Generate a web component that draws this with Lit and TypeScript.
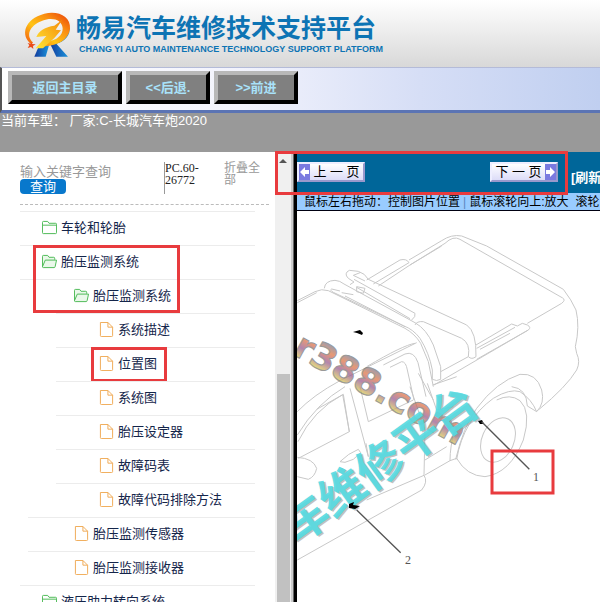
import { LitElement, html, css, svg, nothing } from "lit";
import { customElement, property } from "lit/decorators.js";

type Kind = "folder" | "open" | "file";
interface Row {
  label: string;
  kind: Kind;
  level: 1 | 2 | 3;
  rule?: "deep" | "mid";
  mark?: boolean;
}

const ROWS: Row[] = [
  { label: "车轮和轮胎", kind: "folder", level: 1 },
  { label: "胎压监测系统", kind: "open", level: 1 },
  { label: "胎压监测系统", kind: "open", level: 2 },
  { label: "系统描述", kind: "file", level: 3, rule: "deep" },
  { label: "位置图", kind: "file", level: 3, rule: "deep", mark: true },
  { label: "系统图", kind: "file", level: 3, rule: "deep" },
  { label: "胎压设定器", kind: "file", level: 3, rule: "deep" },
  { label: "故障码表", kind: "file", level: 3, rule: "deep" },
  { label: "故障代码排除方法", kind: "file", level: 3, rule: "deep" },
  { label: "胎压监测传感器", kind: "file", level: 2, rule: "mid" },
  { label: "胎压监测接收器", kind: "file", level: 2, rule: "mid" },
  { label: "液压助力转向系统", kind: "folder", level: 1 },
];

const icons = {
  folder: svg`<path d="M.5 13.500V2.500Q.5 1.500 1.500 1.500H6L7.500 3.500H14.500Q15.500 3.500 15.500 4.500V13.500Q15.500 14.500 14.500 14.500H1.500Q.5 14.500 .5 13.500ZM1 5.500H15" />`,
  open: svg`<path d="M.5 13.500V2.500Q.5 1.500 1.500 1.500H6L7.500 3.500H12.500Q13.500 3.500 13.500 4.500V6M.5 13.500L3.500 6.500H15.500L14 13.500Q13.800 14.500 13 14.500H1.500Q.5 14.500 .5 13.500Z" />`,
  file: svg`<path d="M1.500 .5H9.500L14.500 5.500V14.500Q14.500 15.500 13.500 15.500H2.500Q1.500 15.500 1.500 14.500ZM9.500 .5V5.500H14.500" />`,
};

@customElement("brand-bar")
class BrandBar extends LitElement {
  static styles = css`
    :host {
      display: flex;
      height: 67px;
      flex: none;
      background: linear-gradient(#fff, #d8d8d8);
      padding-left: 15px;
      color: #0d74b4;
    }
    .logo { width: 60px; height: 55px; margin-top: 5px; }
    .names { margin-top: 9px; white-space: nowrap; }
    .title { font: bold 25px/34px "Noto Sans CJK SC", sans-serif; margin: 0 0 0 1px; }
    .sub { font: bold 9px/12px "Liberation Sans", Arial, sans-serif; margin: 0 0 0 4px; }
  `;
  render() {
    return html`
      <svg class="logo" viewBox="0 0 180 165" aria-hidden="true">
        <defs>
          <linearGradient id="o" x1="0" y1="1" x2="1" y2="0">
            <stop offset="0" stop-color="#f04a10" />
            <stop offset=".4" stop-color="#ffc414" />
            <stop offset=".7" stop-color="#f98a10" />
            <stop offset="1" stop-color="#e83c08" />
          </linearGradient>
          <linearGradient id="y" x1="1" y1="0" x2="0" y2="1">
            <stop offset="0" stop-color="#f58a08" />
            <stop offset="1" stop-color="#ffe634" />
          </linearGradient>
          <linearGradient id="b" x1="0" y1="0" x2="1" y2="0">
            <stop offset="0" stop-color="#123a9c" />
            <stop offset="1" stop-color="#1c9ae0" />
          </linearGradient>
        </defs>
        <path fill="url(#b)" d="M163 66C168 92 148 110 124 116L159 155H124L104 114C140 108 158 92 163 66Z" />
        <path fill="url(#b)" d="M72 122L104 114L92 155H58Z" />
        <path fill="url(#o)" d="M50 118C14 92 28 42 88 26C130 16 168 34 165 72C161 104 128 122 90 124L100 109C124 106 144 92 143 70C141 44 112 36 82 47C42 62 32 92 54 112Z" />
        <path fill="url(#y)" d="M64 96C72 76 90 66 118 62L142 44L122 74L138 76L118 99L84 130H62L94 93Z" />
        <path fill="#ea4a18" d="M48 110L52 117L62 118L54 123L55 132L48 126L38 129L43 121L38 114L47 116Z" />
      </svg>
      <div class="names">
        <h1 class="title">畅易汽车维修技术支持平台</h1>
        <p class="sub">CHANG YI AUTO MAINTENANCE TECHNOLOGY SUPPORT PLATFORM</p>
      </div>
    `;
  }
}

@customElement("tree-row")
class TreeRow extends LitElement {
  @property({ attribute: false }) row!: Row;
  static styles = css`
    :host { display: block; }
    .row {
      display: flex;
      align-items: center;
      height: 31px;
      padding-bottom: 2px;
      border-top: 1px solid #ececec;
      margin: 0 20px;
      gap: 4px;
      color: #14254a;
      font-size: 13px;
      line-height: 16px;
      text-decoration: none;
      white-space: nowrap;
      position: relative;
    }
    .l1 { padding-left: 22px; }
    .l2 { padding-left: 54px; }
    .mid { margin-left: 28px; padding-left: 46px; }
    .deep { margin-left: 56px; padding-left: 43px; }
    .icon { width: 15px; height: 15px; fill: none; stroke-width: 1; flex: none; }
    .folder, .open { stroke: #46b850; }
    .open { fill: #eaf8ea; }
    .file { stroke: #efa850; }
    .mark { position: absolute; inset: -1px 88px -1px 35px; border: 3px solid #e83b3e; }
  `;
  render() {
    const r = this.row;
    return html`<a class="row l${r.level} ${r.rule ?? ""}" href="#">
      <svg class="icon ${r.kind}" viewBox="0 0 16 16" aria-hidden="true">${icons[r.kind]}</svg>
      <span>${r.label}</span>
      ${r.mark ? html`<i class="mark"></i>` : nothing}
    </a>`;
  }
}

@customElement("truck-view")
class TruckView extends LitElement {
  static styles = css`
    :host { display: block; flex: 1; min-height: 0; background: #fff; overflow: hidden; }
    .art { display: block; width: 100%; height: 100%; }
    .line { fill: none; stroke: #c8c8c8; stroke-width: 3; stroke-linejoin: round; }
    .site { font: bold 36px "DejaVu Sans", sans-serif; fill: url(#rainbow); stroke: #777; stroke-width: 1; opacity: .75; }
    .brand { font: bold 46px "Noto Sans CJK SC", sans-serif; }
    .shade { fill: #999; opacity: .6; }
    .teal { fill: #55dbe2; opacity: .9; }
    .lead { stroke: #555; stroke-width: 4; }
    .num { font: 12px "Liberation Serif", serif; fill: #555; }
    .box { fill: none; stroke: #e83b3e; stroke-width: 3; }
  `;
  render() {
    return html`<svg class="art" viewBox="297 211 303 391" preserveAspectRatio="xMinYMin slice" role="img" aria-label="位置图">
      <defs>
        <linearGradient id="rainbow" gradientUnits="userSpaceOnUse" x1="0" y1="-28" x2="0" y2="2">
          <stop offset="0" stop-color="#6f7d9c" />
          <stop offset=".3" stop-color="#e07848" />
          <stop offset=".6" stop-color="#9a5d92" />
          <stop offset="1" stop-color="#e8dc4c" />
        </linearGradient>
      </defs>
      <g class="line" transform="translate(290 210) scale(.33333)">
        <path d="M22 272L75 245Q95 235 115 242L345 355Q375 372 392 400L415 455L430 530" />
        <path d="M22 278L80 248" />
        <path d="M103 235Q105 212 135 211Q150 212 162 222L375 338Q410 358 430 405L452 470V508Q440 515 427 508V480Q418 430 390 385Q370 358 340 347L130 247Q118 240 125 237L150 243" />
        <path d="M175 205Q160 190 178 181L205 184Q225 190 235 208L400 285L530 345Q560 365 558 440Q545 450 535 440Q542 400 515 385L400 335Q380 333 375 345" />
        <path d="M175 205L192 216L180 224M210 188L190 196L225 213M192 208L375 310Q378 320 365 330M200 232L360 326M155 248L190 254M165 258L345 350M200 230L225 235L220 250L200 245Z" />
        <path d="M230 210L330 150Q350 145 357 158L250 222M265 228L360 165L455 108" />
        <path d="M357 150L455 92Q485 72 515 78L590 108L820 238Q845 270 858 300Q870 350 856 410L860 430Q872 455 860 480Q830 530 745 600" />
        <path d="M360 165L465 100Q490 76 510 88L818 264Q828 270 815 280L712 340" />
        <path d="M558 405L665 342L682 348L697 340L712 345Q725 352 715 360L560 448M560 415L675 352M570 418L660 370" />
        <path d="M432 525L715 360M452 485L535 440" />
        <path d="M22 605Q70 555 150 512L380 398M375 400Q340 405 230 470M280 465L345 432Q372 422 384 458L408 560M300 472L335 455Q348 455 352 480L372 570" />
        <path d="M80 598L160 553L178 665M180 535L235 740M210 530L235 635L370 570" />
      </g>
      <g class="line" transform="translate(290 380) scale(.33333)">
        <path d="M22 165Q80 70 165 20M24 185Q70 90 158 44L178 155L25 235" />
        <path d="M385 -20L430 60M360 20L405 150L402 288M412 10L440 90L490 80M428 15L500 -10" />
        <path d="M22 232Q70 235 80 265Q75 290 55 298L22 290M150 245Q175 220 205 208L212 218L190 238L165 247ZM235 230L228 190" />
        <path d="M22 540L395 330Q415 305 402 286L230 360M405 285L480 242L500 235M494 150Q480 200 480 242M405 240L470 200" />
        <path d="M497 238Q520 140 560 85Q620 5 690 -17Q740 -22 755 30Q765 70 740 95Q725 58 690 35Q660 25 610 55Q520 120 500 238" />
        <path d="M500 235Q530 288 585 290Q660 280 700 180Q725 95 690 62Q660 40 620 60M665 20Q710 25 712 78L740 95" />
        <ellipse cx="624" cy="180" rx="48" ry="70" transform="rotate(24 624 180)" />
      </g>
      <path d="M353 332L360 330L363 333L362 335L357 333Z" />
      <text class="site" transform="translate(270 342) rotate(29)">er388.com</text>
      <g transform="translate(314 533) rotate(-36)">
        <text class="brand shade" x="-21" y="2">车维修平台</text>
        <text class="brand teal" x="-22" y="0">车维修平台</text>
      </g>
      <path d="M478 421L482 420L484 424L480 424ZM349 504L354 502L353 505L360 506L355 509L349 508Z" />
      <g class="lead" transform="translate(290 380) scale(.33333)">
        <path d="M575 125L718 268M200 390L332 518" />
      </g>
      <text class="num" x="533" y="481">1</text>
      <text class="num" x="405" y="564">2</text>
      <rect class="box" x="492" y="451" width="61" height="42" />
    </svg>`;
  }
}

@customElement("app-root")
class AppRoot extends LitElement {
  static styles = css`
    :host {
      display: flex;
      flex-direction: column;
      height: 100vh;
      overflow: hidden;
      font: 13px/16px "Liberation Sans", "Noto Sans CJK SC", sans-serif;
    }
    .tools {
      flex: none;
      box-sizing: border-box;
      height: 46px;
      display: flex;
      gap: 4px;
      padding: 3px 6px;
      border-left: 2px solid #555;
      border-top: 1px solid #b4bbd8;
      border-bottom: 3px solid #5b74b4;
      background: linear-gradient(90deg, #fff, #f2f3fc 40%, #d6def6 70%, #c0cff0);
    }
    .tool {
      box-sizing: border-box;
      height: 33px;
      width: 84px;
      border: 4px solid;
      border-color: #b8b8b8 #000 #000 #b8b8b8;
      background: #808080;
      color: #a9e2fa;
      font: bold 13px/16px "Liberation Sans", "Noto Sans CJK SC", sans-serif;
      padding: 0;
      white-space: nowrap;
    }
    .wide { width: 114px; }
    .status { flex: none; height: 39px; background: #999; color: #fff; padding-left: 1px; white-space: pre; }
    .main { flex: 1; min-height: 0; display: flex; position: relative; }
    .side { flex: none; width: 275px; background: #fff; overflow: hidden; position: relative; }
    .search {
      display: flex;
      margin: 0 6px 6px 20px;
      padding-top: 10px;
      height: 42px;
      border-bottom: 1px dashed #bbb;
    }
    .find { width: 144px; display: flex; flex-direction: column; align-items: flex-start; padding-top: 2px; }
    .field { width: 120px; height: 15px; border: 0; padding: 0; background: none; font: inherit; outline: 0; }
    .field::placeholder { color: #999; opacity: 1; }
    .go { width: 46px; height: 15px; border: 0; border-radius: 4px; padding: 0; background: #0878cc; color: #fff; font: inherit; line-height: 14px; }
    .code { width: 50px; height: 32px; border-left: 1px solid #999; font: 12px/12px "Liberation Serif", serif; color: #222; }
    .fold { width: 40px; margin-left: 9px; color: #999; font-size: 12px; line-height: 12px; text-decoration: none; }
    .mark { position: absolute; border: 3px solid #e83b3e; pointer-events: none; }
    .mark-tree { left: 33px; top: 93px; width: 141px; height: 62px; }
    .mark-nav { left: 275px; top: -1px; width: 287px; height: 38px; }
    .track { flex: none; width: 16px; background: #f0f0f0; display: flex; flex-direction: column; align-items: center; }
    .up { flex: none; margin-top: 7px; border: 4px solid transparent; border-top: 0; border-bottom: 4px solid #555; }
    .gap { flex: 211; }
    .thumb { flex: 228; width: 13px; background: #c1c1c1; }
    .split { flex: none; width: 1px; border-left: 2px solid #ccc; border-right: 3px solid #000; background: #666; }
    .view { flex: 1; min-width: 0; display: flex; flex-direction: column; overflow: hidden; }
    .nav { flex: none; height: 41px; background: #069; display: flex; align-items: flex-start; white-space: nowrap; overflow: hidden; }
    .page {
      flex: none;
      box-sizing: border-box;
      display: flex;
      align-items: center;
      justify-content: center;
      height: 20px;
      width: 68px;
      margin-top: 10px;
      padding: 0;
      border: 2px solid;
      border-color: #eef #99c #99c #eef;
      background: linear-gradient(#fff, #dcdcf8);
      color: #000;
      font: 13px/16px "Liberation Sans", "Noto Sans CJK SC", sans-serif;
    }
    .label { flex: 1; white-space: nowrap; }
    .arrow { width: 11px; height: 16px; background: #7a7ae0; fill: #fff; }
    .next { margin-left: 125px; }
    .reload { flex: none; color: #fff; font-weight: bold; text-decoration: none; margin: 18px 0 0 13px; }
    .tips {
      flex: none;
      height: 17px;
      border-bottom: 1px solid #001;
      background: #9cf;
      font-size: 12px;
      line-height: 18px;
      padding-left: 7px;
      display: flex;
      gap: 3px;
      white-space: nowrap;
      overflow: hidden;
      color: #000;
    }
    .bar { color: #5a86c0; }
    .more { padding-left: 4px; }
  `;
  render() {
    return html`
      <brand-bar></brand-bar>
      <nav class="tools">
        <button class="tool wide">返回主目录</button>
        <button class="tool">&lt;&lt;后退.</button>
        <button class="tool">&gt;&gt;前进</button>
      </nav>
      <div class="status">当前车型： 厂家:C-长城汽车炮2020</div>
      <div class="main">
        <aside class="side">
          <div class="search">
            <div class="find">
              <input class="field" type="text" placeholder="输入关键字查询" aria-label="输入关键字查询" />
              <button class="go">查询</button>
            </div>
            <div class="code">PC.60-<br />26772</div>
            <a class="fold" href="#">折叠全部</a>
          </div>
          ${ROWS.map((r) => html`<tree-row .row=${r}></tree-row>`)}
          <i class="mark mark-tree"></i>
        </aside>
        <div class="track"><i class="up"></i><i class="gap"></i><i class="thumb"></i></div>
        <div class="split"></div>
        <section class="view">
          <div class="nav">
            <button class="page">
              <svg class="arrow" viewBox="0 0 11 16" aria-hidden="true"><path d="M1 8L6 3V6H10V10H6V13Z" /></svg>
              <span class="label">上 一 页</span>
            </button>
            <button class="page next">
              <span class="label">下 一 页</span>
              <svg class="arrow" viewBox="0 0 11 16" aria-hidden="true"><path d="M10 8L5 3V6H1V10H5V13Z" /></svg>
            </button>
            <a class="reload" href="#">[刷新</a>
          </div>
          <div class="tips">
            <span>鼠标左右拖动：控制图片位置</span><span class="bar">|</span><span>鼠标滚轮向上:放大</span><span class="more">滚轮</span>
          </div>
          <truck-view></truck-view>
        </section>
        <i class="mark mark-nav"></i>
      </div>
    `;
  }
}
